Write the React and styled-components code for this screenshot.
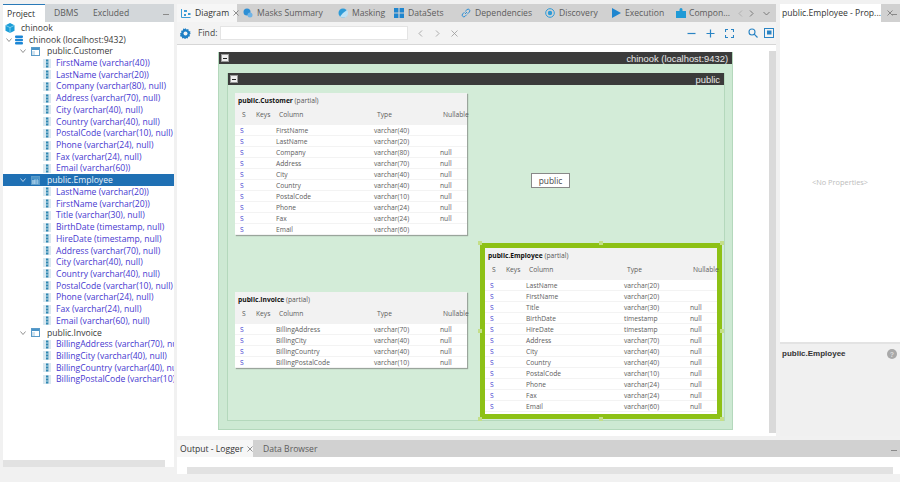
import React from "react";
import styled, { createGlobalStyle } from "styled-components";

const Global = createGlobalStyle`
  html, body { margin: 0; padding: 0; background: #f1f1f1; }
  body { width: 900px; height: 482px; overflow: hidden; font-family: "Open Sans", "Noto Sans", sans-serif; color: #333; }
  * { box-sizing: border-box; }
`;

const Page = styled.div`
  width: 900px;
  height: 482px;
  padding-top: 4px;
  display: grid;
  grid-template-columns: 171px 1fr;
  column-gap: 3px;
  padding-left: 3px;
`;
const LeftPanel = styled.div`
  display: flex;
  flex-direction: column;
  height: 470px;
  background: #fff;
`;
const TabStrip = styled.div`
  display: flex;
  align-items: stretch;
  height: ${({ $h }) => $h || 18}px;
  flex: none;
  background: ${({ $bg }) => $bg || "#d1d1d1"};
  font-size: 8.6px;
  white-space: nowrap;
  overflow: hidden;
`;
const Tab = styled.div`
  display: flex;
  align-items: center;
  gap: 4px;
  flex: none;
  width: ${({ $w }) => ($w ? `${$w}px` : "auto")};
  padding-left: ${({ $pl }) => $pl ?? 6}px;
  color: ${({ $active }) => ($active ? "#333" : "#5c5c5c")};
  background: ${({ $active }) => ($active ? "#f6f6f6" : "transparent")};
`;
const ProjectTab = styled(Tab)`
  background: ${({ $active }) => ($active ? "#fff" : "transparent")};
  border-top: ${({ $active }) => ($active ? "1px solid #2a7ab8" : "none")};
`;
const Minimize = styled.span`
  margin-left: auto;
  margin-right: ${({ $mr }) => $mr ?? 5}px;
  align-self: center;
  width: 6px;
  height: 1px;
  margin-top: 3px;
  background: #8a8a8a;
  flex: none;
`;
const Tree = styled.div`
  flex: 1;
  padding-top: 0;
  font-size: 8.6px;
  overflow: hidden;
`;
const Row = styled.div`
  display: flex;
  align-items: center;
  height: 11.72px;
  white-space: nowrap;
  padding-left: ${({ $lvl }) => [7, 7, 17, 40][$lvl]}px;
  gap: ${({ $lvl }) => ($lvl === 3 ? 5 : 3)}px;
  color: ${({ $lvl, $sel }) => ($sel ? "#e9f1f8" : $lvl === 3 ? "#4638cf" : "#3a3a3a")};
  background: ${({ $sel }) => ($sel ? "#1f70b4" : "transparent")};
`;
const Twisty = styled.svg`
  width: 6px;
  height: 6px;
  flex: none;
  margin-right: 2px;
`;
const HScroll = styled.div`
  height: 7px;
  flex: none;
  background: #e2e2e2;
  margin-right: ${({ $mr }) => $mr ?? 0}px;
  margin-left: ${({ $ml }) => $ml ?? 0}px;
`;
const LeftFoot = styled.div`
  height: 7px;
  flex: none;
  background: #f1f1f1;
`;

const RightArea = styled.div`
  display: flex;
  flex-direction: column;
  height: 478px;
`;
const TopRow = styled.div`
  display: flex;
  height: 432px;
  flex: none;
  gap: 4px;
`;
const Main = styled.div`
  width: 599px;
  display: flex;
  flex-direction: column;
  background: #fff;
`;
const Toolbar = styled.div`
  height: 23px;
  flex: none;
  display: flex;
  align-items: center;
  background: #f3f3f3;
  border-bottom: 1px solid #d6d6d6;
  padding-left: 3px;
  font-size: 8.6px;
  color: #444;
`;
const FindInput = styled.div`
  width: 188px;
  height: 14px;
  background: #fff;
  border: 1px solid #e4e4e4;
  margin-left: 3px;
  flex: none;
`;
const ToolIcon = styled.svg`
  width: ${({ $s }) => $s || 10}px;
  height: ${({ $s }) => $s || 10}px;
  flex: none;
  margin-left: ${({ $ml }) => $ml || 0}px;
`;
const CanvasWrap = styled.div`
  flex: 1;
  display: flex;
  min-height: 0;
`;
const Canvas = styled.div`
  flex: 1;
  padding: 7px 0 0 41px;
  overflow: hidden;
`;
const VScroll = styled.div`
  width: 7px;
  flex: none;
  margin: 6px 0 3px;
  background: #dadada;
`;
const Group = styled.div`
  width: ${({ $w }) => $w}px;
  height: ${({ $h }) => $h}px;
  display: flex;
  flex-direction: column;
  background: ${({ $bg }) => $bg};
  border: 1px solid #b4d8bc;
  border-top: none;
`;
const GroupHead = styled.div`
  height: 12px;
  flex: none;
  display: flex;
  align-items: center;
  justify-content: space-between;
  background: #3b3b3b;
  color: #e6e6e6;
  font-family: "Liberation Sans", sans-serif;
  font-size: ${({ $fs }) => $fs}px;
  padding: 0 4px 0 2px;
`;
const Collapse = styled.span`
  width: 8px;
  height: 8px;
  background: #eee;
  border: 1px solid #999;
  display: flex;
  align-items: center;
  justify-content: center;
  &::after {
    content: "";
    width: 4px;
    height: 1px;
    background: #222;
  }
`;
const GroupBody = styled.div`
  flex: 1;
  padding: 9px 8px 9px 8px;
  min-height: 0;
`;
const NodeSpace = styled.div`
  position: relative;
  width: 100%;
  height: 100%;
`;
const Node = styled.div`
  position: absolute;
  left: ${({ $x }) => $x}px;
  top: ${({ $y }) => $y}px;
  width: 232px;
  background: #fff;
  box-shadow: 1px 1px 1px #9aa59c;
  font-size: 6.7px;
  color: #555;
`;
const SelectionFrame = styled.div`
  position: absolute;
  left: 252px;
  top: 158px;
  width: 242px;
  height: 176px;
  background: #8dc115;
  border-radius: 2px;
  padding: 5px;
`;
const Handle = styled.span`
  position: absolute;
  width: 4px;
  height: 4px;
  background: #c4df88;
  left: ${({ $l }) => $l}%;
  top: ${({ $t }) => $t}%;
  transform: translate(-50%, -50%);
`;
const NodeInFrame = styled(Node)`
  position: static;
  box-shadow: none;
  height: 100%;
`;
const NodeHead = styled.div`
  background: #f2f2f2;
  height: 32px;
  padding: 3px 0 0 3px;
`;
const NodeTitle = styled.div`
  color: #555;
  line-height: 9px;
  b { color: #111; font-weight: 700; }
`;
const Cols = styled.div`
  display: grid;
  grid-template-columns: 14px 23px 98px 66px 1fr;
  padding: 0 0 0 4px;
  height: ${({ $h }) => $h || 11}px;
  align-items: center;
  white-space: nowrap;
  margin-top: ${({ $mt }) => $mt || 0}px;
  border-bottom: ${({ $line }) => ($line ? "1px solid #f3f3f3" : "none")};
  color: #5c5c5c;
`;
const Sigil = styled.span`
  color: #4a3fd0;
  padding-left: 1px;
`;
const PublicLabel = styled.div`
  position: absolute;
  left: 303px;
  top: 88px;
  width: 39px;
  height: 15px;
  background: #fff;
  border: 1px solid #888;
  display: flex;
  align-items: center;
  justify-content: center;
  font-size: 8.4px;
  color: #444;
`;
const RightPanel = styled.div`
  flex: 1;
  display: flex;
  flex-direction: column;
  background: #fff;
`;
const Props = styled.div`
  flex: 1;
  background: #fff;
  display: flex;
  align-items: center;
  justify-content: center;
  font-size: 7.4px;
  color: #bcbcbc;
  padding-top: 0;
  height: 320px;
`;
const Details = styled.div`
  height: 94px;
  flex: none;
  background: #f0f0f0;
  border-top: 2px solid #e3e3e3;
  display: flex;
  justify-content: space-between;
  padding: 5px 3px 0 2px;
  font-size: 8px;
  font-weight: 700;
  color: #333;
  font-family: "Liberation Sans", sans-serif;
`;
const Help = styled.span`
  width: 10px;
  height: 10px;
  border-radius: 50%;
  background: #a9a9a9;
  color: #ddd;
  font-size: 7px;
  display: flex;
  align-items: center;
  justify-content: center;
`;
const Bottom = styled.div`
  margin-top: 4px;
  height: 42px;
  display: flex;
  flex-direction: column;
`;
const BottomBody = styled.div`
  height: 17px;
  flex: none;
  background: #fff;
  padding-top: 10px;
`;

const Caret = ({ open = true, color = "#777" }) => (
  <Twisty viewBox="0 0 6 6">
    <path d={open ? "M.5 1.5 3 4.5l2.5-3" : "M2 .5 5 3 2 5.5"} fill="none" stroke={color} strokeWidth=".8" />
  </Twisty>
);
const ColumnIcon = () => (
  <svg width="8" height="9" viewBox="0 0 8 9" style={{ flex: "none" }}>
    <rect x="0" y="0" width="8" height="9" fill="#d9e8f0" />
    <rect x="3" y="0.5" width="2.4" height="8" fill="#2e86b0" />
    <path d="M3 3h2.4M3 6h2.4" stroke="#e8f4f8" strokeWidth=".8" />
  </svg>
);
const TableIcon = ({ light }) => (
  <svg width="9" height="9" viewBox="0 0 9 9" style={{ flex: "none" }}>
    <rect x=".5" y=".5" width="8" height="8" fill={light ? "#3b8ac4" : "#fff"} stroke="#5b9bc8" />
    <rect x="1" y="1" width="7" height="2" fill="#4a94c8" />
    <path d="M1 5h3M1 7h3" stroke={light ? "#cfe4f4" : "#88b6d6"} strokeWidth=".8" />
    {light && <path d="M4 3v5M6.2 3v5M1 5h7M1 7h7" stroke="#cfe4f4" strokeWidth=".6" />}
  </svg>
);
const Cube = () => (
  <svg width="10" height="10" viewBox="0 0 10 10" style={{ flex: "none" }}>
    <path d="M5 0 9.5 2.3v5.4L5 10 .5 7.7V2.3z" fill="#1b9ed8" />
    <path d="M.5 2.3 5 4.6l4.5-2.3M5 4.6V10" fill="none" stroke="#bfe7f7" strokeWidth=".6" />
  </svg>
);
const DbIcon = () => (
  <svg width="8" height="10" viewBox="0 0 8 10" style={{ flex: "none" }}>
    <rect x="0" y=".5" width="8" height="2.4" rx="1" fill="#1b86d6" />
    <rect x="0" y="3.8" width="8" height="2.4" rx="1" fill="#1b86d6" />
    <rect x="0" y="7.1" width="8" height="2.4" rx="1" fill="#1b86d6" />
  </svg>
);

const Tabi = ({ children }) => (
  <svg width="10" height="10" viewBox="0 0 10 10" style={{ flex: "none" }}>{children}</svg>
);
const Close = () => (
  <svg width="6" height="6" viewBox="0 0 6 6" style={{ flex: "none" }}>
    <path d="M.5.5l5 5M5.5.5l-5 5" stroke="#666" strokeWidth=".7" />
  </svg>
);

const col = (name, type, nul) => `${name} (${type}${nul ? ", null" : ""})`;
const customer = [
  ["FirstName", "varchar(40)", 0], ["LastName", "varchar(20)", 0], ["Company", "varchar(80)", 1],
  ["Address", "varchar(70)", 1], ["City", "varchar(40)", 1], ["Country", "varchar(40)", 1],
  ["PostalCode", "varchar(10)", 1], ["Phone", "varchar(24)", 1], ["Fax", "varchar(24)", 1], ["Email", "varchar(60)", 0],
];
const employee = [
  ["LastName", "varchar(20)", 0], ["FirstName", "varchar(20)", 0], ["Title", "varchar(30)", 1],
  ["BirthDate", "timestamp", 1], ["HireDate", "timestamp", 1], ["Address", "varchar(70)", 1],
  ["City", "varchar(40)", 1], ["Country", "varchar(40)", 1], ["PostalCode", "varchar(10)", 1],
  ["Phone", "varchar(24)", 1], ["Fax", "varchar(24)", 1], ["Email", "varchar(60)", 1],
];
const invoice = [
  ["BillingAddress", "varchar(70)", 1], ["BillingCity", "varchar(40)", 1],
  ["BillingCountry", "varchar(40)", 1], ["BillingPostalCode", "varchar(10)", 1],
];
const treeEmployee = employee.map(([n, t, u]) =>
  [n, t === "timestamp" ? "timestamp" : t, u]);

const TableBody = ({ name, rows }) => (
  <>
    <NodeHead>
      <NodeTitle><b>{name}</b> (partial)</NodeTitle>
      <Cols $h={11} $mt={4}>
        <span>S</span><span>Keys</span><span>Column</span><span>Type</span><span>Nullable</span>
      </Cols>
    </NodeHead>
    {rows.map(([n, t, u], i) => (
      <Cols key={n} $line $mt={i === 0 ? 0 : 0}>
        <Sigil>S</Sigil><span />
        <span>{n}</span><span>{t}</span><span>{u ? "null" : ""}</span>
      </Cols>
    ))}
  </>
);

const handles = [[0, 0], [50, 0], [100, 0], [0, 50], [100, 50], [0, 100], [50, 100], [100, 100]];

export default function App() {
  return (
    <Page>
      <Global />
      <LeftPanel>
        <TabStrip $bg="#d3d7da">
          <ProjectTab $active $w={42} $pl={4}>Project</ProjectTab>
          <ProjectTab $w={39} $pl={9}>DBMS</ProjectTab>
          <ProjectTab $w={50} $pl={9}>Excluded</ProjectTab>
          <Minimize />
        </TabStrip>
        <Tree>
          <Row $lvl={0} style={{ paddingLeft: 2, marginTop: 0, gap: 6 }}><Cube />chinook</Row>
          <Row $lvl={1} style={{ paddingLeft: 3, gap: 1 }}><Caret /><DbIcon /><span style={{ marginLeft: 5 }}>chinook (localhost:9432)</span></Row>
          <Row $lvl={2}><Caret /><TableIcon /><span style={{ marginLeft: 4 }}>public.Customer</span></Row>
          {customer.map(([n, t, u]) => (
            <Row $lvl={3} key={n}><ColumnIcon />{col(n, t, u)}</Row>
          ))}
          <Row $lvl={2} $sel><Caret color="#dce9f4" /><TableIcon light /><span style={{ marginLeft: 4 }}>public.Employee</span></Row>
          {treeEmployee.map(([n, t, u]) => (
            <Row $lvl={3} key={n}><ColumnIcon />{col(n, t, u)}</Row>
          ))}
          <Row $lvl={2}><Caret /><TableIcon /><span style={{ marginLeft: 4 }}>public.Invoice</span></Row>
          {invoice.map(([n, t, u]) => (
            <Row $lvl={3} key={n}><ColumnIcon />{col(n, t, u)}</Row>
          ))}
        </Tree>
        <HScroll $mr={9} />
        <LeftFoot />
      </LeftPanel>

      <RightArea>
        <TopRow>
          <Main>
            <TabStrip>
              <Tab $active $w={60} $pl={4}>
                <Tabi><path d="M.5 1v8.5H9.5" fill="none" stroke="#3a9bd6" /><path d="M3 2h3v2H3zM7 5h2.5v2H7zM3 6h2v2H3z" fill="#3a9bd6" /></Tabi>
                Diagram<Close />
              </Tab>
              <Tab $w={87} $pl={6}>
                <Tabi><circle cx="4" cy="4" r="3.5" fill="#2d8fd5" /><circle cx="7" cy="7" r="2.5" fill="#6fb4e6" /></Tabi>
                Masks Summary
              </Tab>
              <Tab $w={61} $pl={14}>
                <Tabi><circle cx="5" cy="5" r="4.5" fill="#2d9bd8" /><path d="M5 5 9 2a4.5 4.5 0 0 1-4 7.5 4 4 0 0 1-3-1z" fill="#bfe2f5" /></Tabi>
                Masking
              </Tab>
              <Tab $w={64} $pl={9}>
                <Tabi><path d="M0 0h4.4v4.4H0zM5.6 0H10v4.4H5.6zM0 5.6h4.4V10H0zM5.6 5.6H10V10H5.6z" fill="#1f86cf" /></Tabi>
                DataSets
              </Tab>
              <Tab $w={84} $pl={12}>
                <Tabi><path d="M4 6l2-2M3.4 4.2 1.6 6a1.7 1.7 0 0 0 2.4 2.4l1.8-1.8M4.2 3.4 6 1.6A1.7 1.7 0 0 1 8.4 4L6.6 5.8" fill="none" stroke="#2d8fd5" strokeWidth="1" /></Tabi>
                Dependencies
              </Tab>
              <Tab $w={71} $pl={12}>
                <Tabi><circle cx="5" cy="5" r="4.3" fill="none" stroke="#2d9bd8" strokeWidth="1" /><circle cx="5" cy="5" r="2.2" fill="#2d9bd8" /></Tabi>
                Discovery
              </Tab>
              <Tab $w={66} $pl={7}>
                <Tabi><path d="M1 0l9 5-9 5z" fill="#1f86cf" /></Tabi>
                Execution
              </Tab>
              <Tab $w={64} $pl={6} style={{ gap: 3 }}>
                <Tabi><path d="M0 3h3.5V1.5a1.5 1.5 0 0 1 3 0V3H10v7H0z" fill="#1f9ad6" /></Tabi>
                Compon...
              </Tab>
              <Tab $pl={4} style={{ gap: 6 }}>
                <svg width="5" height="7" viewBox="0 0 5 7"><path d="M4 .5 1 3.5l3 3" fill="none" stroke="#aaa" strokeWidth=".8" /></svg>
                <svg width="5" height="7" viewBox="0 0 5 7"><path d="M1 .5l3 3-3 3" fill="none" stroke="#666" strokeWidth=".8" /></svg>
                <svg width="7" height="5" viewBox="0 0 7 5" style={{ marginLeft: 3 }}><path d="M.5 1 3.5 4l3-3" fill="none" stroke="#666" strokeWidth=".8" /></svg>
                <svg width="7" height="7" viewBox="0 0 7 7"><rect x=".5" y=".5" width="6" height="6" fill="none" stroke="#777" strokeWidth=".7" /></svg>
              </Tab>
            </TabStrip>
            <Toolbar>
              <ToolIcon $s={11} viewBox="0 0 11 11">
                <path d="M5.5 0l1 1.6 1.8-.5.4 1.9 1.8.4-.5 1.8L11 5.5 9.5 6.6l.5 1.7-1.8.5-.5 1.8-1.7-.5-.9 1.4-1.1-1.4-1.7.5-.5-1.8-1.8-.5.5-1.7L0 5.5l1.5-.9L1 2.8l1.8-.4.4-1.9 1.8.5z" fill="#1f7fc4" />
                <circle cx="5.5" cy="5.5" r="2" fill="#f3f3f3" />
              </ToolIcon>
              <span style={{ marginLeft: 7 }}>Find:</span>
              <FindInput />
              <ToolIcon $s={7} $ml={9} viewBox="0 0 7 7"><path d="M5 .5 2 3.5l3 3" fill="none" stroke="#999" strokeWidth=".8" /></ToolIcon>
              <ToolIcon $s={7} $ml={10} viewBox="0 0 7 7"><path d="M2 .5l3 3-3 3" fill="none" stroke="#999" strokeWidth=".8" /></ToolIcon>
              <ToolIcon $s={7} $ml={10} viewBox="0 0 7 7"><path d="M.5.5l6 6M6.5.5l-6 6" stroke="#999" strokeWidth=".8" /></ToolIcon>
              <ToolIcon $s={9} $ml={229} viewBox="0 0 9 9"><path d="M.5 4.5h8" stroke="#2a84c4" strokeWidth="1.2" /></ToolIcon>
              <ToolIcon $s={9} $ml={10} viewBox="0 0 9 9"><path d="M.5 4.5h8M4.5.5v8" stroke="#2a84c4" strokeWidth="1.2" /></ToolIcon>
              <ToolIcon $s={9} $ml={10} viewBox="0 0 9 9"><path d="M.5 3V.5H3M6 .5h2.5V3M8.5 6v2.5H6M3 8.5H.5V6" fill="none" stroke="#2a84c4" strokeWidth="1.1" /></ToolIcon>
              <ToolIcon $s={10} $ml={14} viewBox="0 0 10 10"><circle cx="4" cy="4" r="3" fill="none" stroke="#2a84c4" strokeWidth="1.1" /><path d="M6.2 6.2 9.5 9.5" stroke="#2a84c4" strokeWidth="1.2" /></ToolIcon>
              <ToolIcon $s={10} $ml={6} viewBox="0 0 10 10"><rect x=".5" y=".5" width="9" height="9" fill="none" stroke="#2a84c4" /><rect x="3" y="2.5" width="4.5" height="4" fill="#2a84c4" /></ToolIcon>
            </Toolbar>
            <CanvasWrap>
              <Canvas>
                <Group $w={515} $h={378} $bg="#cde9d3">
                  <GroupHead $fs={9.4}>
                    <Collapse />chinook (localhost:9432)
                  </GroupHead>
                  <GroupBody>
                    <Group $w={498} $h={348} $bg="#d3ecd8">
                      <GroupHead $fs={9.4}>
                        <Collapse />public
                      </GroupHead>
                      <NodeSpace>
                        <Node $x={7} $y={8}>
                          <TableBody name="public.Customer" rows={customer} />
                        </Node>
                        <Node $x={7} $y={207}>
                          <TableBody name="public.Invoice" rows={invoice} />
                        </Node>
                        <PublicLabel>public</PublicLabel>
                        <SelectionFrame>
                          {handles.map(([l, t]) => <Handle key={`${l}-${t}`} $l={l} $t={t} />)}
                          <NodeInFrame>
                            <TableBody name="public.Employee" rows={employee} />
                          </NodeInFrame>
                        </SelectionFrame>
                      </NodeSpace>
                    </Group>
                  </GroupBody>
                </Group>
              </Canvas>
              <VScroll />
            </CanvasWrap>
          </Main>
          <RightPanel>
            <TabStrip>
              <Tab $active $w={101} $pl={2} style={{ background: "#fff", gap: 6 }}>
                public.Employee - Prop...<Close />
              </Tab>
              <Minimize $mr={3} />
            </TabStrip>
            <Props>&lt;No Properties&gt;</Props>
            <Details>public.Employee<Help>?</Help></Details>
          </RightPanel>
        </TopRow>
        <Bottom>
          <TabStrip $h={17}>
            <Tab $active $w={76} $pl={3}>Output - Logger<Close /></Tab>
            <Tab $pl={10}>Data Browser</Tab>
            <Minimize $mr={3} />
          </TabStrip>
          <BottomBody>
            <HScroll $ml={10} $mr={7} />
          </BottomBody>
        </Bottom>
      </RightArea>
    </Page>
  );
}
